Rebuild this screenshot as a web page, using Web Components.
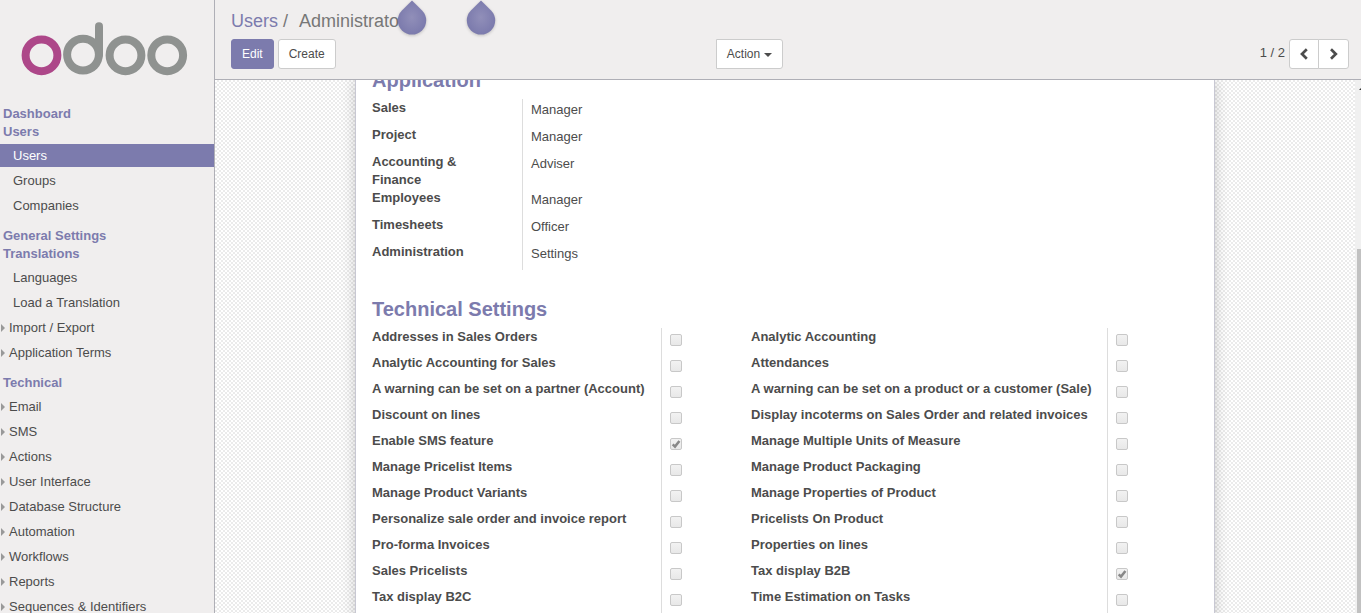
<!DOCTYPE html>
<html lang="en"><head><meta charset="utf-8"><title>Administrator - Odoo</title>
<style>
html,body{margin:0;height:100%;overflow:hidden}
body{font:13px/18px "Liberation Sans",Arial,sans-serif;color:#4c4c4c;--brand:#7c7bad;--chrome:#f0eeee}
</style></head><body>
<odoo-app></odoo-app>
<script>
const define=(name,css,html,setup)=>customElements.define(name,class extends HTMLElement{
  connectedCallback(){
    if(this.shadowRoot)return;
    const r=this.attachShadow({mode:'open'});
    r.innerHTML=`<style>*{box-sizing:border-box}${css}</style>${typeof html==='function'?html(this):html}`;
  }
});

define('odoo-logo',':host{display:block;height:104px;padding:19px 0 0 19px}svg{display:block}',
`<svg width="172" height="60" viewBox="19 19 172 60" fill="none" stroke="#8f9290" stroke-width="8">
<circle cx="41.5" cy="55.3" r="15.9" stroke="#ad4789"/><circle cx="83" cy="54.6" r="15.9"/>
<path d="M99 54.6V26.3" stroke-linecap="round"/><circle cx="125.5" cy="55.3" r="15.9"/><circle cx="167.2" cy="55.3" r="15.9"/></svg>`);

define('menu-heading',':host{display:block;height:18px;line-height:19px;padding-left:3px;font-weight:bold;color:var(--brand)}','<slot></slot>');

define('menu-section',':host{display:block;margin-bottom:8px}div{padding-top:3px;display:flex;flex-direction:column}','<slot name="heading"></slot><div><slot></slot></div>');

define('menu-item',`:host{display:flex;align-items:center;height:23px;margin:1px 0;padding:1px 0 0 13px;line-height:22px;white-space:nowrap;flex:none}
:host([active]){background:var(--brand);color:#fff}:host([parent]){padding-left:1px}svg{width:4px;height:8px;margin-right:4px;flex:none}`,
e=>(e.hasAttribute('parent')?'<svg viewBox="0 0 4 8"><path d="M0 0L4 4L0 8Z" fill="#999"/></svg>':'')+'<slot></slot>');

const items=(a,attr='')=>a.map(t=>`<menu-item ${attr}>${t}</menu-item>`).join('');
const head=t=>`<menu-heading slot="heading">${t}</menu-heading>`;
define('side-bar',':host{display:block;width:215px;flex:none;background:var(--chrome);border-right:1px solid #afafb6;overflow:hidden}',
`<odoo-logo></odoo-logo><menu-section>${head('Dashboard')}${head('Users')}${items(['Users'],'active')}${items(['Groups','Companies'])}</menu-section>
<menu-section>${head('General Settings')}${head('Translations')}${items(['Languages','Load a Translation'])}${items(['Import / Export','Application Terms'],'parent')}</menu-section>
<menu-section>${head('Technical')}${items(['Email','SMS','Actions','User Interface','Database Structure','Automation','Workflows','Reports','Sequences &amp; Identifiers'],'parent')}</menu-section>`);

define('ui-button',`:host{display:flex;align-items:center;justify-content:center;height:30px;padding:0 10px;border:1px solid #ccc;border-radius:3px;background:#fff;font-size:12px;line-height:18px;color:#4c4c4c}
:host([primary]){background:var(--brand);border-color:var(--brand);color:#fff}`,'<slot></slot>');

define('pager-box',`:host{display:flex;align-items:center}span{margin:-3px 4px 0 0}ui-button{width:30px;padding:0}
ui-button:first-of-type{border-radius:3px 0 0 3px}ui-button:last-of-type{border-radius:0 3px 3px 0;margin-left:-1px;width:31px}svg{display:block;margin-top:-1px}`,
`<span>1 / 2</span><ui-button><svg width="12" height="12" viewBox="0 0 12 12" fill="none" stroke="#4c4c4c" stroke-width="2.7"><path d="M8.8 1.3L4 6L8.8 10.7"/></svg></ui-button><ui-button><svg width="12" height="12" viewBox="0 0 12 12" fill="none" stroke="#4c4c4c" stroke-width="2.7"><path d="M3 1.3L7.8 6L3 10.7"/></svg></ui-button>`);

define('touch-handle',':host{position:absolute;top:0;width:40px;height:44px}svg{display:block;filter:drop-shadow(0 1px 1.5px #0003)}',
`<svg width="40" height="44" viewBox="0 0 40 44"><defs><radialGradient id="g"><stop stop-color="#918fb9"/><stop offset="1" stop-color="#7c7bad"/></radialGradient></defs><path d="M20 .4L30.1 10.4A14.2 14.2 0 1 1 9.9 10.4Z" fill="url(#g)"/></svg>`);

define('control-panel',`:host{display:block;position:relative;height:80px;flex:none;background:var(--chrome);border-bottom:1px solid #afafb6;padding:9px 12px 0 16px}
.crumb{font-size:18px;line-height:24px;height:30px;color:#777;white-space:pre}.crumb b{font-weight:normal;color:var(--brand)}.crumb i{font-style:normal;margin-left:1px}
.bar{display:grid;grid-template-columns:485px 67px 1fr;align-items:start}.left{display:flex;gap:4px}
.act{border-radius:0 3px 3px 0;padding:0}svg{margin:2px 0 0 4px}pager-box{justify-self:end}
.h1{left:177px}.h2{left:246px}`,
`<div class="crumb"><b>Users</b> /  <i>Administrator</i></div><div class="bar"><div class="left"><ui-button primary>Edit</ui-button><ui-button>Create</ui-button></div>
<ui-button class="act">Action<svg width="8" height="4" viewBox="0 0 8 4"><path d="M0 0H8L4 4Z" fill="#4c4c4c"/></svg></ui-button><pager-box></pager-box></div>
<touch-handle class="h1"></touch-handle><touch-handle class="h2"></touch-handle>`);

define('check-box',`:host{display:block;box-sizing:border-box;width:12px;height:12px;border:1px solid #c8c8c8;border-radius:2px;background:linear-gradient(#f2f2f2,#e8e8e8)}svg{display:block}`,
e=>e.hasAttribute('checked')?'<svg width="10" height="10" viewBox="0 0 10 10"><path d="M1.7 5.4L4 7.6L8.4 2" fill="none" stroke="#888" stroke-width="2.5"/></svg>':'');

define('field-row',`:host{display:grid;grid-template-columns:var(--label) 1fr;min-height:var(--row)}
b{line-height:18px;white-space:pre-line}.v{border-left:1px solid #ddd;padding:2px 0 0 8px}`,
'<b><slot></slot></b><div class="v"><slot name="value"></slot></div>');

define('section-title',':host{display:block;font-size:20px;font-weight:bold;line-height:24px;color:var(--brand)}','<slot></slot>');

const check=(t,on)=>`<field-row>${t}<check-box slot="value" ${on?'checked':''}></check-box></field-row>`;
const left=['Addresses in Sales Orders','Analytic Accounting for Sales','A warning can be set on a partner (Account)','Discount on lines','Enable SMS feature','Manage Pricelist Items','Manage Product Variants','Personalize sale order and invoice report','Pro-forma Invoices','Sales Pricelists','Tax display B2C'];
const right=['Analytic Accounting','Attendances','A warning can be set on a product or a customer (Sale)','Display incoterms on Sales Order and related invoices','Manage Multiple Units of Measure','Manage Product Packaging','Manage Properties of Product','Pricelists On Product','Properties on lines','Tax display B2B','Time Estimation on Tasks'];
const apps=[['Sales','Manager'],['Project','Manager'],['Accounting &amp;\nFinance','Adviser'],['Employees','Manager'],['Timesheets','Officer'],['Administration','Settings']];
define('form-sheet',`:host{display:block;width:860px;height:560px;margin-left:140px;background:#fff;border:solid #c8c8d3;border-width:0 1px;padding:0 16px;box-shadow:0 0 13px #0003;box-sizing:border-box;overflow:hidden}
.first{margin-top:-12px;height:31px}.apps{--label:150px;--row:27px;margin-bottom:27px}.tech-title{height:31px}check-box{margin-top:4px}
.tech{display:grid;grid-template-columns:379px 1fr;--row:26px}.l{--label:289px}.r{--label:356px}`,
`<section-title class="first">Application</section-title><div class="apps">${apps.map(a=>`<field-row>${a[0]}<span slot="value">${a[1]}</span></field-row>`).join('')}</div>
<section-title class="tech-title">Technical Settings</section-title><div class="tech"><div class="l">${left.map((t,i)=>check(t,i===4)).join('')}</div><div class="r">${right.map((t,i)=>check(t,i===9)).join('')}</div></div>`);

define('scroll-track',`:host{display:block;width:6px;flex:none;background:#f0f0f0;padding-left:2px;box-sizing:border-box}
i{display:block;height:153px}svg{display:block;margin-top:8px}.thumb{height:400px;background:#c1c1c1}`,
'<svg width="4" height="8" viewBox="0 0 4 8"><path d="M2 2L4 0V2Z" fill="#333"/></svg><i></i><div class="thumb"></div>');

define('form-view',`:host{display:flex;flex:1;min-height:0;overflow:hidden}
.canvas{flex:1;overflow:hidden;background:repeating-conic-gradient(#ebebeb 0 25%,#fff 0 50%) 0 0/4px 4px}`,
'<div class="canvas"><form-sheet></form-sheet></div><scroll-track></scroll-track>');

define('odoo-app',':host{display:flex;width:100%;height:100%;overflow:hidden}main{flex:1;min-width:0;display:flex;flex-direction:column}',
'<side-bar></side-bar><main><control-panel></control-panel><form-view></form-view></main>');
</script></body></html>
